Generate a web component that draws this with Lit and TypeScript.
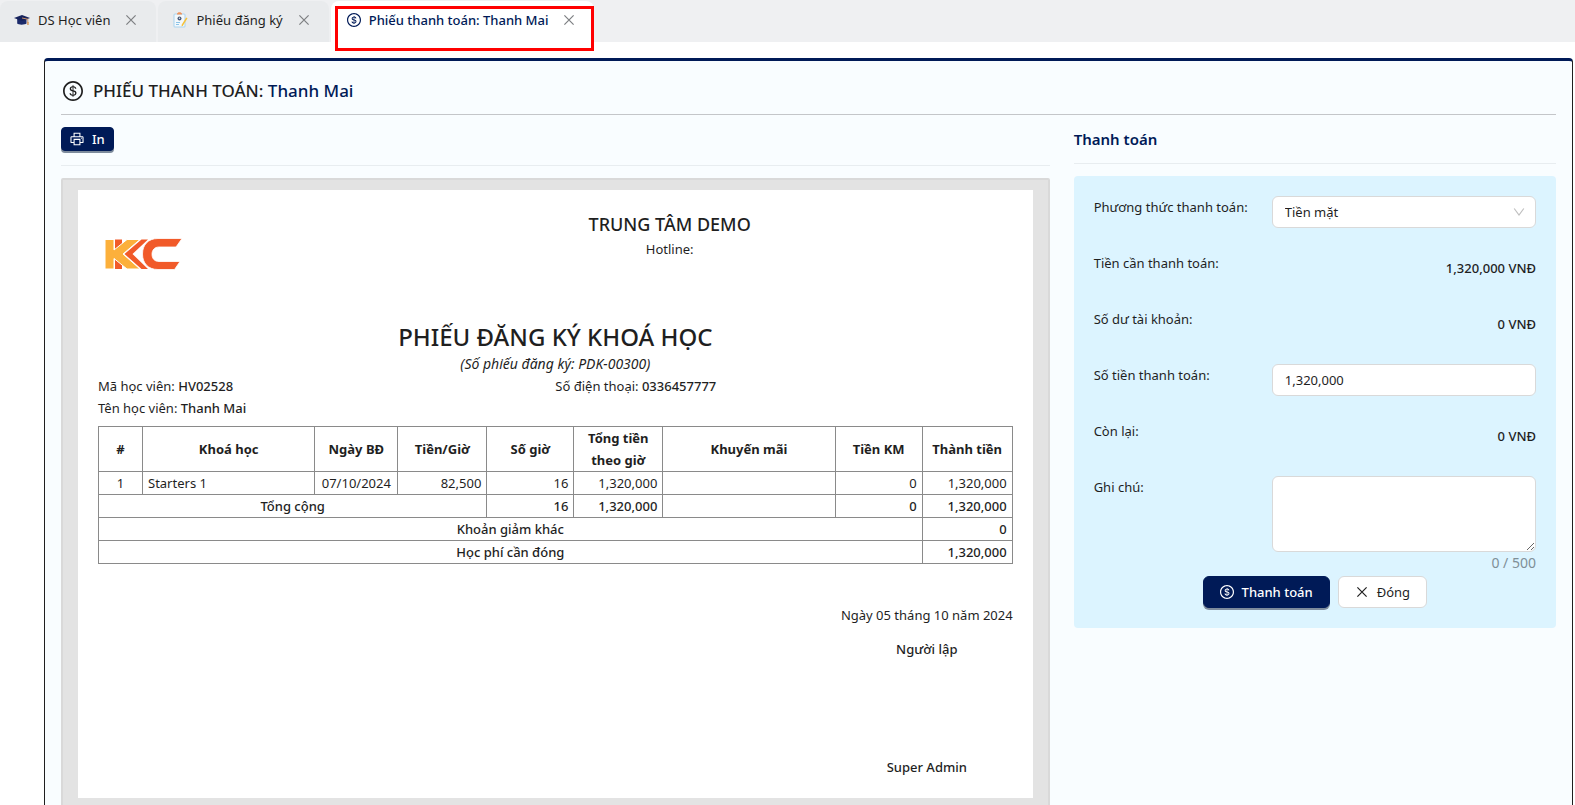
import { LitElement, html, css } from "lit";
import { customElement, state } from "lit/decorators.js";

const DOLLAR =
  "M512 64C264.6 64 64 264.6 64 512s200.6 448 448 448 448-200.6 448-448S759.4 64 512 64zm0 820c-205.4 0-372-166.6-372-372s166.6-372 372-372 372 166.6 372 372-166.6 372-372 372zm47.7-395.2l-25.4-5.9V348.6c38 5.2 61.5 29 65.5 58.2.5 4 3.9 6.9 7.9 6.9h44.9c4.7 0 8.4-4.1 8-8.8-6.1-62.3-57.4-102.3-125.9-109.2V263c0-4.4-3.6-8-8-8h-28.1c-4.4 0-8 3.6-8 8v33c-70.8 6.9-126.2 46-126.2 119 0 67.6 49.8 100.2 102.1 112.7l24.7 6.3v142.7c-44.2-5.9-69-29.5-74.1-61.3-.6-3.8-4-6.6-7.9-6.6H363c-4.7 0-8.4 4-8 8.7 4.5 55 46.2 105.6 135.2 112.1V761c0 4.4 3.6 8 8 8h28.4c4.4 0 8-3.6 8-8.1l-.2-31.7c78.3-6.9 134.3-48.8 134.3-124-.1-69.4-44.2-100.4-109-116.4zm-68.6-16.2c-5.6-1.6-10.3-3.1-15-5-33.8-12.2-49.5-31.9-49.5-57.3 0-36.3 27.5-57 64.5-61.7v124zM534.3 677V543.3c3.1.9 5.9 1.6 8.8 2.2 47.3 14.4 63.2 34.4 63.2 65.1 0 39.1-29.4 62.6-72 66.4z";
const PRINTER =
  "M820 436h-40c-4.4 0-8 3.6-8 8v40c0 4.4 3.6 8 8 8h40c4.4 0 8-3.6 8-8v-40c0-4.4-3.6-8-8-8zm32-104H732V120c0-4.4-3.6-8-8-8H300c-4.4 0-8 3.6-8 8v212H172c-44.2 0-80 35.8-80 80v328c0 17.7 14.3 32 32 32h168v132c0 4.4 3.6 8 8 8h424c4.4 0 8-3.6 8-8V772h168c17.7 0 32-14.3 32-32V412c0-44.2-35.8-80-80-80zM360 180h304v152H360V180zm304 664H360V568h304v276zm200-140H732V500H292v204H160V412c0-6.6 5.4-12 12-12h680c6.6 0 12 5.4 12 12v292z";

const glyph = (d: string, size: number) =>
  html`<svg width=${size} height=${size} viewBox="64 64 896 896" fill="currentColor" aria-hidden="true"><path d=${d}></path></svg>`;
const cross = () =>
  html`<svg width="14" height="14" viewBox="0 0 14 14" fill="none" stroke="currentColor" stroke-width="1.2" aria-hidden="true"><path d="M2.400 2.400l9.200 9.200M11.600 2.400l-9.200 9.200"></path></svg>`;

const capIcon = html`<svg width="16" height="14" viewBox="0 0 16 14" aria-hidden="true">
  <path d="M3.200 5.500h9.300v5c-1.200 1.300-8 1.700-9.300 0z" fill="#1b2a6b"></path>
  <path d="M0 5L8 2l8 3-8 3z" fill="#16225c"></path>
  <path d="M8 5l5.800 1.200v4" fill="none" stroke="#c9926a" stroke-width="1"></path>
  <path d="M13.200 9h1.500v3h-1.500z" fill="#d99a5a"></path>
</svg>`;

const noteIcon = html`<svg width="16" height="16" viewBox="0 0 16 16" aria-hidden="true">
  <rect x="1.500" y="1.500" width="12" height="14" rx="1.500" fill="#a9d3ee"></rect>
  <rect x="2.500" y="2.500" width="10" height="12" fill="#f3f8fb"></rect>
  <path d="M5 2.500h5V1.500L8.500.3h-2L5 1.500z" fill="#f0935a"></path>
  <circle cx="7.500" cy="6.500" r="2" fill="#4a5a78"></circle>
  <circle cx="7.500" cy="6.300" r=".7" fill="#dfe6ee"></circle>
  <path d="M4 10.500h4M4 12.500h3" stroke="#8cc4e8" stroke-width="1"></path>
  <path d="M14.200 5.500l1.300.8-4.300 7-1.700 1.200.3-2z" fill="#f7c137"></path>
</svg>`;

const logo = html`<svg width="78" height="32" viewBox="0 0 78 32" role="img" aria-label="KC">
  <path d="M11 1.500h7v9l-7 5zM11 17l7 5v9h-7z" fill="#f15a29"></path>
  <path d="M37.500 1.500H44L28.500 16 44 31h-6.500L20.500 16z" fill="#f15a29"></path>
  <path d="M1 1.500h9v10.500L23 1.500h13L19 16l17 15H23L10 20.500V31H1z" fill="#fcb03b" stroke="#fff" stroke-width="1"></path>
  <path d="M78 .5H54C44 .5 38.500 7 38.500 16S44 31.500 54 31.500h16.500l5.500-8H55c-4.500 0-7-3-7-7.200S50.500 9 55 9h17z" fill="#f15a29" stroke="#fff" stroke-width=".8"></path>
</svg>`;

type Tab = { icon: unknown; label: string };

@customElement("app-root")
export class AppRoot extends LitElement {
  @state() private note = "";
  @state() private active = 2;

  private tabs: Tab[] = [
    { icon: capIcon, label: "DS Học viên" },
    { icon: noteIcon, label: "Phiếu đăng ký" },
    { icon: glyph(DOLLAR, 14), label: "Phiếu thanh toán: Thanh Mai" },
  ];

  private courses = [
    { name: "Starters 1", start: "07/10/2024", rate: "82,500", hours: "16", total: "1,320,000", promo: "", off: "0", net: "1,320,000" },
  ];

  static styles = css`
    :host {
      display: block;
      height: 100vh;
      overflow: hidden;
      background: #fff;
      color: #1f1f1f;
      font: 13px/22px "Noto Sans", "Segoe UI", sans-serif;
    }
    * { box-sizing: border-box; }
    button, input, select, textarea { font: inherit; color: inherit; }
    svg { display: block; flex: none; }
    h1, h2, h3, p { margin: 0; font-weight: 500; }

    .tabs { display: flex; gap: 2px; height: 42px; padding-top: 1px; background: #eff0f2; }
    .tab { position: relative; display: flex; align-items: flex-start; padding: 8px 14px 0; background: #e9ebed; border-radius: 8px 8px 0 0; }
    .tab.active { padding-left: 16px; background: #fff; color: #001a57; }
    .tab-name { display: flex; align-items: center; gap: 8px; padding: 0; border: 0; background: none; cursor: pointer; white-space: nowrap; }
    .tab.active .tab-name { font-weight: 500; }
    .tab-close { height: 22px; margin-left: 10px; padding: 0 4px; border: 0; background: none; color: #7d7f82; cursor: pointer; }
    .marker { position: absolute; inset: 5px 0 -9px 4px; border: 3px solid #f00; pointer-events: none; }

    .card { margin: 16px 2px 0 44px; padding: 16px; min-height: 100vh; border: 1px solid #1f1f1f; border-top: 3px solid #001a57; border-radius: 4px; background: #f9fdff; }
    .title { display: flex; align-items: center; gap: 10px; height: 38px; padding: 0 2px 10px; border-bottom: 1px solid #c4c6c9; font-size: 17px; line-height: 28px; }
    .title-text b { font-weight: 500; color: #001a57; }

    .columns { display: flex; margin: 0 -12px; }
    .left { width: 66.667%; padding: 12px 12px 0; }
    .right { width: 33.333%; padding: 12px 12px 0; }
    .bar { display: flex; align-items: center; height: 39px; padding-bottom: 14px; border-bottom: 1px solid #e8edf0; margin-bottom: 12px; }
    .right .bar { height: 37px; padding-bottom: 12px; }
    .bar h2 { font-size: 15px; line-height: 24px; font-weight: 600; color: #001a57; }

    .btn { display: inline-flex; align-items: center; justify-content: center; gap: 8px; height: 32px; padding: 0 16px; border: 1px solid #d9d9d9; border-radius: 6px; background: #fff; cursor: pointer; }
    .btn.primary { border-color: #001a57; background: #001a57; color: #fff; font-weight: 500; box-shadow: 0 2px 0 #7d8b9c; }
    .btn.small { height: 24px; padding: 0 8px; border-radius: 4px; }

    .tray { padding: 10px 15px; border: 2px solid #d9d9d9; border-radius: 2px; background: #e3e3e3; }
    .paper { padding: 20px; background: #fff; }
    .letterhead { display: grid; grid-template-columns: 1fr 3fr; min-height: 111px; }
    .brand { padding: 28px 0 0 6px; }
    .center { text-align: center; }
    .center h2 { font-size: 18px; line-height: 28px; }
    .doc-title { font-size: 24px; line-height: 32px; text-align: center; }
    .doc-no { font-size: 14px; font-style: italic; font-weight: 400; text-align: center; }
    .info { display: grid; grid-template-columns: 1fr 1fr; margin-bottom: 7px; }
    .info b { font-weight: 500; }

    .lines { width: 100%; border-collapse: collapse; table-layout: fixed; }
    .lines th, .lines td { padding: 0 5px; border: 1px solid #8a8a8a; height: 23px; font-weight: 400; }
    .lines thead th { font-weight: 700; }
    .lines thead th:nth-child(6) { padding: 0 10px; }
    .lines tfoot td, .lines tfoot th { font-weight: 500; }
    .c-no { width: 44px; }
    .c-date { width: 83px; }
    .c-sum { width: 89px; }
    .c-qty { width: 87px; }
    .c-net { width: 90px; }
    .num { text-align: right; }
    .mid { text-align: center; }

    .sign { display: grid; justify-content: end; margin-top: 40px; text-align: center; }
    .sign p { font-weight: 400; }
    .sign .role { margin: 12px 0 96px; font-weight: 500; }
    .sign .who { font-weight: 500; }

    .panel { padding: 20px; border-radius: 4px; background: #dcf4ff; }
    .rows { display: grid; gap: 24px; }
    .row { display: grid; grid-template-columns: 2fr 3fr; column-gap: 2px; min-height: 32px; }
    .value { display: block; text-align: right; font-weight: 500; line-height: 32px; }
    .field { width: 100%; height: 32px; padding: 0 12px; border: 1px solid #d9d9d9; border-radius: 6px; background: #fff; }
    .select { position: relative; display: block; }
    .select .field { appearance: none; display: block; }
    .select svg { position: absolute; right: 11px; top: 11px; color: #bfbfbf; pointer-events: none; }
    .note { display: block; height: 76px; padding: 4px 11px; resize: vertical; }
    .count { display: block; text-align: right; font-size: 14px; color: #7f8f97; }
    .actions { display: flex; justify-content: center; gap: 8px; margin-top: 2px; }
  `;

  private renderTab(tab: Tab, i: number) {
    const on = i === this.active;
    return html`<div class="tab ${on ? "active" : ""}">
      <button class="tab-name" role="tab" aria-selected=${on} @click=${() => (this.active = i)}>${tab.icon}<span>${tab.label}</span></button>
      <button class="tab-close" aria-label="Đóng thẻ">${cross()}</button>
      ${on ? html`<span class="marker"></span>` : ""}
    </div>`;
  }

  private renderTable() {
    return html`<table class="lines">
      <colgroup>
        <col class="c-no" /><col /><col class="c-date" /><col class="c-sum" /><col class="c-qty" />
        <col class="c-sum" /><col /><col class="c-qty" /><col class="c-net" />
      </colgroup>
      <thead>
        <tr>
          <th>#</th><th>Khoá học</th><th>Ngày BĐ</th><th>Tiền/Giờ</th><th>Số giờ</th>
          <th>Tổng tiền theo giờ</th><th>Khuyến mãi</th><th>Tiền KM</th><th>Thành tiền</th>
        </tr>
      </thead>
      <tbody>
        ${this.courses.map(
          (c, i) => html`<tr>
            <td class="mid">${i + 1}</td><td>${c.name}</td><td class="mid">${c.start}</td>
            <td class="num">${c.rate}</td><td class="num">${c.hours}</td><td class="num">${c.total}</td>
            <td>${c.promo}</td><td class="num">${c.off}</td><td class="num">${c.net}</td>
          </tr>`
        )}
      </tbody>
      <tfoot>
        <tr>
          <th colspan="4">Tổng cộng</th><td class="num">16</td><td class="num">1,320,000</td>
          <td></td><td class="num">0</td><td class="num">1,320,000</td>
        </tr>
        <tr><th colspan="8">Khoản giảm khác</th><td class="num">0</td></tr>
        <tr><th colspan="8">Học phí cần đóng</th><td class="num">1,320,000</td></tr>
      </tfoot>
    </table>`;
  }

  render() {
    return html`
      <nav class="tabs" role="tablist">${this.tabs.map((t, i) => this.renderTab(t, i))}</nav>
      <main class="card">
        <h1 class="title">${glyph(DOLLAR, 20)}<span class="title-text">PHIẾU THANH TOÁN: <b>Thanh Mai</b></span></h1>
        <div class="columns">
          <section class="left">
            <div class="bar"><button class="btn primary small">${glyph(PRINTER, 14)}<span>In</span></button></div>
            <div class="tray">
              <article class="paper">
                <header class="letterhead">
                  <div class="brand">${logo}</div>
                  <div class="center"><h2>TRUNG TÂM DEMO</h2>Hotline:</div>
                </header>
                <h2 class="doc-title">PHIẾU ĐĂNG KÝ KHOÁ HỌC</h2>
                <p class="doc-no">(Số phiếu đăng ký: PDK-00300)</p>
                <div class="info">
                  <span>Mã học viên: <b>HV02528</b></span>
                  <span>Số điện thoại: <b>0336457777</b></span>
                  <span>Tên học viên: <b>Thanh Mai</b></span>
                </div>
                ${this.renderTable()}
                <footer class="sign">
                  <p>Ngày 05 tháng 10 năm 2024</p>
                  <p class="role">Người lập</p>
                  <p class="who">Super Admin</p>
                </footer>
              </article>
            </div>
          </section>
          <section class="right">
            <div class="bar"><h2>Thanh toán</h2></div>
            <form class="panel" @submit=${(e: Event) => e.preventDefault()}>
              <div class="rows">
                <div class="row">
                  <label for="method">Phương thức thanh toán:</label>
                  <span class="select">
                    <select id="method" class="field"><option>Tiền mặt</option></select>
                    <svg width="12" height="10" viewBox="0 0 12 10" fill="none" stroke="currentColor" stroke-width="1.200" aria-hidden="true"><path d="M1.200 1.500L6 8l4.800-6.500"></path></svg>
                  </span>
                </div>
                <div class="row"><label for="due">Tiền cần thanh toán:</label><output id="due" class="value">1,320,000 VNĐ</output></div>
                <div class="row"><label for="balance">Số dư tài khoản:</label><output id="balance" class="value">0 VNĐ</output></div>
                <div class="row"><label for="amount">Số tiền thanh toán:</label><input id="amount" class="field" value="1,320,000" /></div>
                <div class="row"><label for="rest">Còn lại:</label><output id="rest" class="value">0 VNĐ</output></div>
                <div class="row">
                  <label for="note">Ghi chú:</label>
                  <div>
                    <textarea id="note" class="field note" maxlength="500" @input=${(e: Event) => (this.note = (e.target as HTMLTextAreaElement).value)}></textarea>
                    <span class="count">${this.note.length} / 500</span>
                  </div>
                </div>
              </div>
              <div class="actions">
                <button class="btn primary" type="submit">${glyph(DOLLAR, 14)}<span>Thanh toán</span></button>
                <button class="btn" type="button">${cross()}<span>Đóng</span></button>
              </div>
            </form>
          </section>
        </div>
      </main>
    `;
  }
}
